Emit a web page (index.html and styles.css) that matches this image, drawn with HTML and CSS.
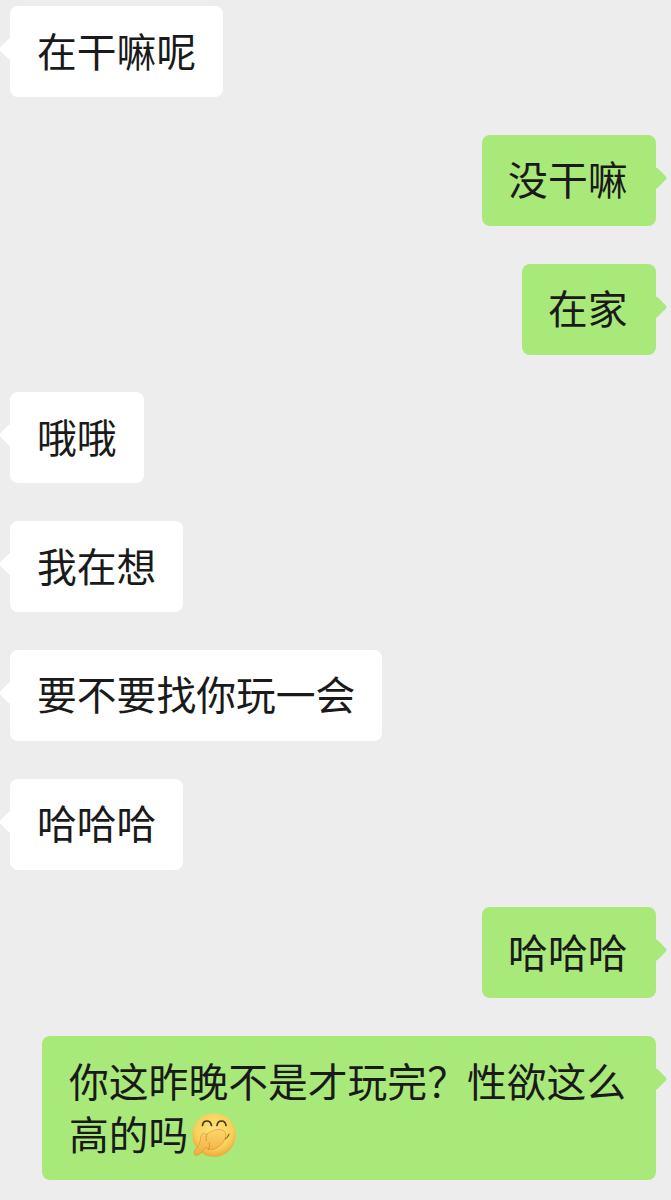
FILE: index.html
```html
<!DOCTYPE html>
<html lang="zh-CN">
<head>
<meta charset="utf-8">
<title>聊天记录</title>
<link rel="stylesheet" href="styles.css">
</head>
<body>
<main class="chat">
  <div class="bubble in">在干嘛呢</div>
  <div class="bubble out">没干嘛</div>
  <div class="bubble out">在家</div>
  <div class="bubble in">哦哦</div>
  <div class="bubble in">我在想</div>
  <div class="bubble in">要不要找你玩一会</div>
  <div class="bubble in">哈哈哈</div>
  <div class="bubble out">哈哈哈</div>
  <div class="bubble out wide">你这昨晚不是才玩完&#xFF1F;性欲这么高的吗<svg class="emoji" viewBox="0 0 44 44" aria-label="偷笑">
      <defs>
        <radialGradient id="face" cx="50%" cy="40%" r="60%">
          <stop offset="0" stop-color="#fce47e"/>
          <stop offset="0.7" stop-color="#f9d05a"/>
          <stop offset="1" stop-color="#eba83a"/>
        </radialGradient>
        <linearGradient id="hand" x1="0" y1="0" x2="0" y2="1">
          <stop offset="0" stop-color="#fcd66c"/>
          <stop offset="1" stop-color="#f2ab40"/>
        </linearGradient>
      </defs>
      <circle cx="22" cy="22" r="21.8" fill="url(#face)"/>
      <path class="eye" d="M10.500 12.500c.6-6 8-6 9 0"/>
      <path class="eye" d="M25 12.500c.8-6 8.200-6 9 0"/>
      <path class="smile" d="M33 26c2-1 3.500-2.800 4-4.800"/>
      <path class="hand" d="M3.800 42.500c-2.100-1.300-2.300-3.400-.9-5.300 2.500-3.100 4.700-5.800 5.300-9.200.4-2.500.3-5.200 1.800-6.700 1.400-1.500 3.500-1 4.300.4 2.700-2.400 6.300-4.200 10-4.900 3.200-.6 6.600-.3 8.200 1.700 2 2.500 1.200 6.100-.5 9.200-2.400 4.300-6.300 7.700-10.800 8.700-3.300.7-5.800-.2-7.500-1.700-2.500 3-5 5.700-7.700 7.300-.8.500-1.500.8-2.200.5z"/>
      <path class="crease" d="M15 21.200c-1.100 1.900-1.200 4.300-.5 6.400M16.400 36.900c.9-2.500 1.300-4.600 1-6.900"/>
    </svg></div>
</main>
</body>
</html>
```
FILE: styles.css
```css
html, body {
  margin: 0;
  padding: 0;
  background: #ededed;
}

body {
  width: 671px;
  height: 1200px;
  overflow: hidden;
  font-family: "Noto Sans CJK SC", "Noto Sans", sans-serif;
}

.chat {
  display: flex;
  flex-direction: column;
  align-items: flex-start;
  gap: 37.75px;
  padding: 6px 15px 0 10px;
}

.bubble {
  position: relative;
  box-sizing: border-box;
  padding: 16.500px 27px 21.500px;
  border-radius: 8px;
  font-size: 39.8px;
  line-height: 53px;
  color: #1a1a1a;
  white-space: nowrap;
}

.bubble::before {
  content: "";
  position: absolute;
  top: 35px;
  width: 16px;
  height: 16px;
  border-radius: 2px;
  background: inherit;
  transform: rotate(45deg);
}

.in {
  background: #ffffff;
}

.in::before {
  left: -8px;
}

.out {
  align-self: flex-end;
  padding-left: 26px;
  padding-right: 28.500px;
  background: #a9e97a;
}

.out::before {
  right: -8px;
}

.wide {
  width: 614px;
  padding-left: 27px;
  white-space: normal;
}

.emoji {
  display: inline-block;
  width: 44px;
  height: 44px;
  margin-left: 4px;
  vertical-align: -7px;
}

.eye {
  fill: none;
  stroke: #4a3520;
  stroke-width: 1.7;
  stroke-linecap: round;
}

.smile {
  fill: none;
  stroke: #8d5a1e;
  stroke-width: 1.2;
  stroke-linecap: round;
}

.hand {
  fill: url(#hand);
  stroke: #d98f2c;
  stroke-width: 0.6;
}

.crease {
  fill: none;
  stroke: #d98f2c;
  stroke-width: 0.9;
  stroke-linecap: round;
}
```
